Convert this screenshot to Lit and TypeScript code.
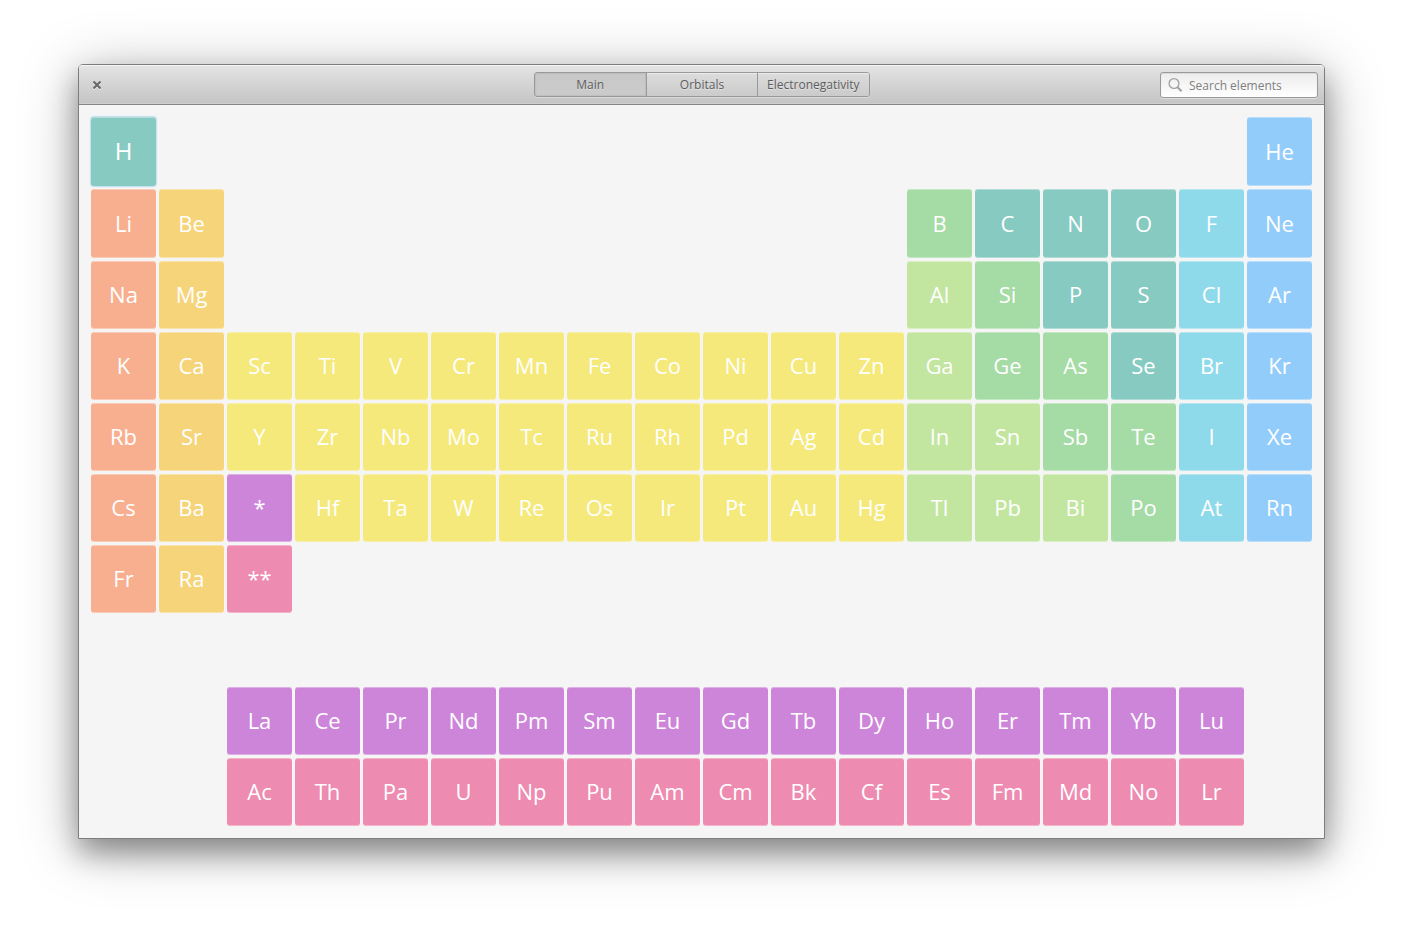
import { LitElement, html, css } from "lit";
import { customElement, state } from "lit/decorators.js";

type Kind =
  | "nonmetal" | "noble" | "alkali" | "earth" | "transition"
  | "poor" | "metalloid" | "halogen" | "lanthanide" | "actinide";

interface Run {
  row: number;
  col: number;
  kind: Kind;
  symbols: string;
}

const COLORS: Record<Kind, string> = {
  nonmetal: "#87cac1",
  noble: "#92ccfb",
  alkali: "#f8af8f",
  earth: "#f6d47a",
  transition: "#f5e97c",
  poor: "#c2e6a0",
  metalloid: "#a5dba5",
  halogen: "#8fdaea",
  lanthanide: "#cd85d9",
  actinide: "#ee8bb1",
};

// Consecutive cells of one family, in reading order.
const RUNS: Run[] = [
  { row: 1, col: 1, kind: "nonmetal", symbols: "H" },
  { row: 1, col: 18, kind: "noble", symbols: "He" },
  { row: 2, col: 1, kind: "alkali", symbols: "Li" },
  { row: 2, col: 2, kind: "earth", symbols: "Be" },
  { row: 2, col: 13, kind: "metalloid", symbols: "B" },
  { row: 2, col: 14, kind: "nonmetal", symbols: "C N O" },
  { row: 2, col: 17, kind: "halogen", symbols: "F" },
  { row: 2, col: 18, kind: "noble", symbols: "Ne" },
  { row: 3, col: 1, kind: "alkali", symbols: "Na" },
  { row: 3, col: 2, kind: "earth", symbols: "Mg" },
  { row: 3, col: 13, kind: "poor", symbols: "Al" },
  { row: 3, col: 14, kind: "metalloid", symbols: "Si" },
  { row: 3, col: 15, kind: "nonmetal", symbols: "P S" },
  { row: 3, col: 17, kind: "halogen", symbols: "Cl" },
  { row: 3, col: 18, kind: "noble", symbols: "Ar" },
  { row: 4, col: 1, kind: "alkali", symbols: "K" },
  { row: 4, col: 2, kind: "earth", symbols: "Ca" },
  { row: 4, col: 3, kind: "transition", symbols: "Sc Ti V Cr Mn Fe Co Ni Cu Zn" },
  { row: 4, col: 13, kind: "poor", symbols: "Ga" },
  { row: 4, col: 14, kind: "metalloid", symbols: "Ge As" },
  { row: 4, col: 16, kind: "nonmetal", symbols: "Se" },
  { row: 4, col: 17, kind: "halogen", symbols: "Br" },
  { row: 4, col: 18, kind: "noble", symbols: "Kr" },
  { row: 5, col: 1, kind: "alkali", symbols: "Rb" },
  { row: 5, col: 2, kind: "earth", symbols: "Sr" },
  { row: 5, col: 3, kind: "transition", symbols: "Y Zr Nb Mo Tc Ru Rh Pd Ag Cd" },
  { row: 5, col: 13, kind: "poor", symbols: "In Sn" },
  { row: 5, col: 15, kind: "metalloid", symbols: "Sb Te" },
  { row: 5, col: 17, kind: "halogen", symbols: "I" },
  { row: 5, col: 18, kind: "noble", symbols: "Xe" },
  { row: 6, col: 1, kind: "alkali", symbols: "Cs" },
  { row: 6, col: 2, kind: "earth", symbols: "Ba" },
  { row: 6, col: 3, kind: "lanthanide", symbols: "*" },
  { row: 6, col: 4, kind: "transition", symbols: "Hf Ta W Re Os Ir Pt Au Hg" },
  { row: 6, col: 13, kind: "poor", symbols: "Tl Pb Bi" },
  { row: 6, col: 16, kind: "metalloid", symbols: "Po" },
  { row: 6, col: 17, kind: "halogen", symbols: "At" },
  { row: 6, col: 18, kind: "noble", symbols: "Rn" },
  { row: 7, col: 1, kind: "alkali", symbols: "Fr" },
  { row: 7, col: 2, kind: "earth", symbols: "Ra" },
  { row: 7, col: 3, kind: "actinide", symbols: "**" },
  { row: 9, col: 3, kind: "lanthanide", symbols: "La Ce Pr Nd Pm Sm Eu Gd Tb Dy Ho Er Tm Yb Lu" },
  { row: 10, col: 3, kind: "actinide", symbols: "Ac Th Pa U Np Pu Am Cm Bk Cf Es Fm Md No Lr" },
];

const CELLS = RUNS.flatMap((run) =>
  run.symbols.split(" ").map((symbol, i) => ({
    symbol,
    row: run.row,
    col: run.col + i,
    color: COLORS[run.kind],
  }))
);

const TABS = ["Main", "Orbitals", "Electronegativity"];

@customElement("app-root")
export class AppRoot extends LitElement {
  @state() private tab = "Main";

  static styles = css`
    :host {
      display: block;
      box-sizing: border-box;
      min-height: 100vh;
      padding: 64px 78px 92px;
      background: #fff;
      font-family: "Open Sans", "Noto Sans", sans-serif;
      font-size: 12px;
      overflow: hidden;
    }
    .window {
      border: 1px solid #7d7d7d;
      border-radius: 5px 5px 0 0;
      background: #f5f5f5;
      box-shadow: 0 14px 28px rgba(0, 0, 0, 0.35), 0 8px 60px rgba(0, 0, 0, 0.28);
    }
    .header {
      display: grid;
      grid-template-columns: 1fr auto 1fr;
      align-items: center;
      height: 40px;
      box-sizing: border-box;
      padding: 0 6px;
      border-bottom: 1px solid #858585;
      border-radius: 4px 4px 0 0;
      background: linear-gradient(#e4e4e4, #c4c4c4);
      box-shadow: inset 0 1px #f6f6f6, inset 0 -1px #cecece;
    }
    .close {
      display: grid;
      place-items: center;
      width: 24px;
      height: 24px;
      padding: 0;
      border: 0;
      background: none;
    }
    .tabs {
      display: grid;
      grid-template-columns: repeat(3, 1fr);
      width: 336px;
      height: 25px;
      box-sizing: border-box;
      border: 1px solid #999;
      border-radius: 3px;
      box-shadow: 0 1px rgba(255, 255, 255, 0.3);
    }
    .tab {
      min-width: 0;
      padding: 0;
      border: 0;
      border-left: 1px solid #999;
      background: linear-gradient(#dcdcdc, #cbcbcb);
      box-shadow: inset 0 1px rgba(255, 255, 255, 0.45);
      color: #5c5c5c;
      font: inherit;
      line-height: 16px;
      text-shadow: 0 1px rgba(255, 255, 255, 0.4);
    }
    .tab:first-child {
      border-left: 0;
      border-radius: 2px 0 0 2px;
    }
    .tab:last-child {
      border-radius: 0 2px 2px 0;
    }
    .tab.active {
      background: linear-gradient(#c8c8c8, #cbcbcb);
      box-shadow: inset 0 0 2px rgba(0, 0, 0, 0.2);
    }
    .search {
      display: flex;
      align-items: center;
      justify-self: end;
      gap: 6px;
      width: 158px;
      height: 26px;
      box-sizing: border-box;
      padding: 0 7px;
      border: 1px solid #999;
      border-radius: 3px;
      background: linear-gradient(#ececec, #fff);
      box-shadow: inset 0 1px 1px rgba(0, 0, 0, 0.08), 0 1px rgba(255, 255, 255, 0.4);
    }
    .glass {
      display: block;
      flex: none;
    }
    .field {
      flex: 1;
      min-width: 0;
      padding: 2px 0 0;
      border: 0;
      outline: 0;
      background: none;
      color: #555;
      font: inherit;
    }
    .field::placeholder {
      color: #808080;
      opacity: 1;
    }
    .table {
      display: grid;
      grid-template-columns: repeat(18, minmax(0, 1fr));
      grid-template-rows: repeat(2, 69px) repeat(8, 68px);
      gap: 3px;
      padding: 12px;
    }
    .cell {
      min-width: 0;
      padding: 0 0 2px;
      border: 0;
      border-radius: 3px;
      box-shadow: inset 0 1px rgba(255, 255, 255, 0.35), inset 0 -1px rgba(255, 255, 255, 0.35);
      color: #fff;
      font: inherit;
      font-size: 22px;
      line-height: 30px;
    }
    .cell.first {
      font-size: 24px;
      box-shadow: inset 0 1px rgba(255, 255, 255, 0.35), 0 0 1px 1px #c3dff2;
    }
  `;

  render() {
    return html`
      <main class="window">
        <header class="header">
          <button class="close" aria-label="Close">
            <svg width="10" height="10" viewBox="0 0 10 10" aria-hidden="true">
              <path d="M1.5 2.5 8.5 9.5M8.5 2.5 1.5 9.5" stroke="#f0f0f0" stroke-width="2.2" />
              <path d="M1.5 1.5 8.5 8.5M8.5 1.5 1.5 8.5" stroke="#6a6a6a" stroke-width="2.2" />
            </svg>
          </button>
          <nav class="tabs" aria-label="Views">
            ${TABS.map(
              (name) => html`<button
                class="tab ${name === this.tab ? "active" : ""}"
                aria-pressed=${name === this.tab}
                @click=${() => (this.tab = name)}
              >${name}</button>`
            )}
          </nav>
          <label class="search">
            <svg class="glass" width="15" height="16" viewBox="0 0 15 16" fill="none" aria-hidden="true">
              <circle cx="6" cy="6.5" r="4.9" stroke="#a0a0a0" stroke-width="1.3" />
              <path d="M9.6 10.2 13.6 14.2" stroke="#a0a0a0" stroke-width="2" />
            </svg>
            <input class="field" type="text" placeholder="Search elements" aria-label="Search elements" />
          </label>
        </header>
        <section class="table" aria-label="Periodic table">
          ${CELLS.map(
            (c) => html`<button
              class="cell ${c.symbol === "H" ? "first" : ""}"
              style="grid-area:${c.row}/${c.col};background-color:${c.color}"
            >${c.symbol}</button>`
          )}
        </section>
      </main>
    `;
  }
}
